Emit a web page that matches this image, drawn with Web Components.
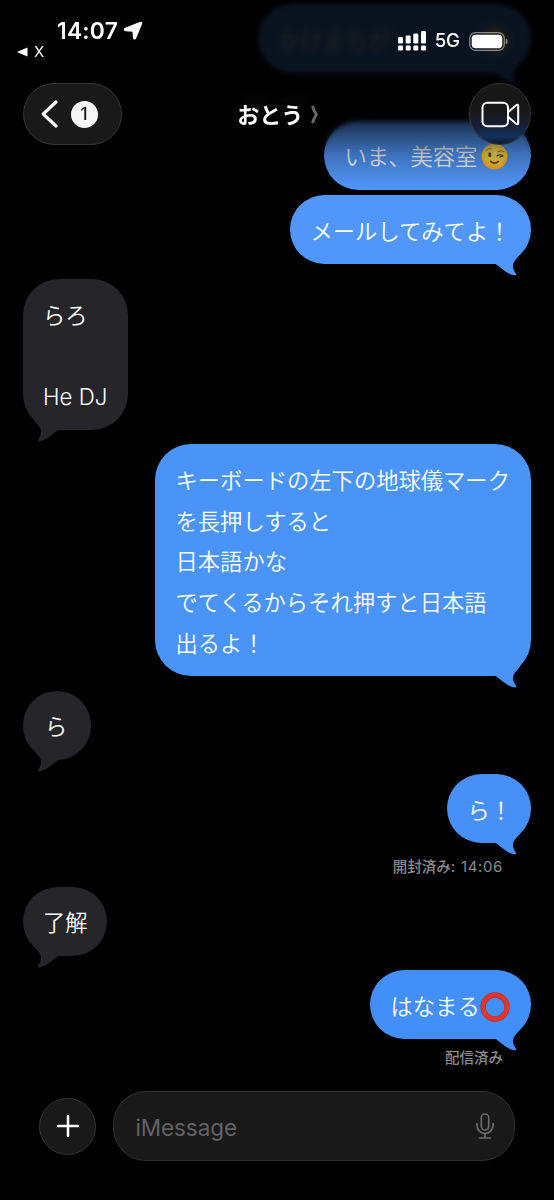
<!DOCTYPE html>
<html lang="ja">
<head>
<meta charset="utf-8">
<title>Messages</title>
<style>
html,body{margin:0;background:#000;height:1200px;overflow:hidden}
body{font-family:Inter,"Noto Sans CJK JP",sans-serif;color:#fff}
</style>
</head>
<body>
<chat-app></chat-app>
<script>
const define = (name, html) => {
  const t = document.createElement('template');
  t.innerHTML = html;
  customElements.define(name, class extends HTMLElement {
    constructor() {
      super();
      this.attachShadow({mode: 'open'}).append(t.content.cloneNode(true));
    }
  });
};

define('wink-emoji', `
<style>:host{display:inline-block;width:27px;height:27px;vertical-align:-5px;margin-left:4px}svg{display:block}</style>
<svg width="27" height="27" viewBox="0 0 27 27">
  <defs><radialGradient id="f" cx=".5" cy=".35" r=".65"><stop offset="0" stop-color="#ffe86a"/><stop offset=".7" stop-color="#ffcf3e"/><stop offset="1" stop-color="#f3a01e"/></radialGradient></defs>
  <circle cx="13.5" cy="13.5" r="13" fill="url(#f)"/>
  <ellipse cx="8.8" cy="11.7" rx="1.6" ry="2.5" fill="#6b450f"/>
  <path d="M5.6 7.3Q7.6 5 10.2 5.5M16.5 9Q20 6.5 23 8.5" fill="none" stroke="#b87a1a" stroke-width="1" stroke-linecap="round"/>
  <path d="M16 12.8Q19 10.9 22 12.9M22 12.9L19 13.8" fill="none" stroke="#6b450f" stroke-width="1.4" stroke-linecap="round"/>
  <path d="M9.5 18.4Q13.5 21.8 17.5 18.4" fill="none" stroke="#6b450f" stroke-width="1.6" stroke-linecap="round"/>
</svg>`);

define('circle-emoji', `
<style>:host{display:inline-block;width:30px;height:30px;vertical-align:-7px}svg{display:block}</style>
<svg width="30" height="30" viewBox="0 0 30 30"><circle cx="15" cy="15" r="12" fill="none" stroke="#b3302c" stroke-width="5.4"/><circle cx="15" cy="15" r="12" fill="none" stroke="#e2352c" stroke-width="4.2"/></svg>`);

define('message-bubble', `
<style>
:host{display:block;position:relative;box-sizing:border-box;width:var(--w);padding:16.5px 0 11.7px var(--pl,20.5px);
  background:var(--c);border-radius:34.5px;font:350 22.3px/40.8px Inter,"Noto Sans CJK JP",sans-serif;color:#fff;
  white-space:nowrap;align-self:flex-end;margin-top:var(--gap,0)}
:host([from=them]){--c:#26252a;--pl:20px;align-self:flex-start}
:host([big]){border-radius:36px}
svg{display:none;position:absolute;right:0;bottom:-12px;fill:var(--c)}
:host([tail]) svg{display:block}
:host([from=them]) svg{right:auto;left:0;transform:scaleX(-1)}
</style>
<slot></slot>
<svg width="40" height="28" viewBox="-40 -16 40 28"><path d="M-36-.3C-32 1.5-25.5 9.3-17 11.3C-15.2 11.8-14.2 10.7-15.2 9.4C-17.6 6.3-18.8 2.5-17.6-.5C-16.5-3.5-14-6-10.8-9.8L-14-13L-34-12Z"/></svg>`);

define('receipt-line', `
<style>:host{display:flex;align-items:center;gap:6px;align-self:flex-end;box-sizing:border-box;height:43.5px;padding:3px 28px 0 0;
  font:500 14.5px/20px Inter,"Noto Sans CJK JP",sans-serif;color:#8a8a8f}
::slotted(time){font-weight:400;font-size:15px;letter-spacing:.6px}</style><slot></slot>`);

define('day-stamp', `
<style>:host{display:flex;gap:6px;align-items:center;align-self:center;height:48px;padding-top:6px;box-sizing:border-box;filter:blur(3px)}
i{display:block;height:9px;width:33px;background:#2a2a2c}</style><i></i><i></i>`);

define('message-thread', `
<style>:host{display:flex;flex-direction:column;box-sizing:border-box;height:1091px;padding:4px 23px 0;overflow:hidden}</style><slot></slot>`);

define('status-bar', `
<style>
:host{display:flex;justify-content:space-between;height:75px;box-sizing:border-box;padding:17px 46px 0 17px}
.time{display:flex;align-items:center;gap:5px;padding-left:40px;font:600 22.8px/28px Inter,sans-serif;letter-spacing:.25px;height:28px}
.back{display:flex;align-items:center;gap:6px;font:400 15px/14px Inter,sans-serif;height:14px}
.right{display:flex;align-items:center;gap:9px;height:22px;padding-top:13px;font:500 18.7px/22px Inter,sans-serif;letter-spacing:-.1px}
svg{display:block}
</style>
<div><div class="time"><span>14:07</span><svg width="20" height="20" viewBox="0 0 20 20" fill="#fff" stroke="#fff" stroke-width="1.4" stroke-linejoin="round"><path d="M17.6 1.5C18.5 1.1 18.9 1.5 18.5 2.4L12.6 17C12.1 18.2 10.7 17.9 10.6 16.7L10.2 10.6Q10.1 10.1 9.6 10L2.8 9.5C1.2 9.4 1 8.1 2.4 7.5Z"/></svg></div>
<div class="back"><svg width="11" height="10" viewBox="0 0 11 10"><path d="M10.5 .4V9.6L.8 5.6Q0 5 .8 4.4Z" fill="#fff"/></svg><span>X</span></div></div>
<div class="right">
<svg width="28" height="20" viewBox="0 0 28 20" fill="#fff"><rect x="0" y="6" width="5" height="6.5" rx="1.3"/><rect x="7.7" y="4.5" width="5" height="8" rx="1.3"/><rect x="15.3" y="2.5" width="5" height="10" rx="1.3"/><rect x="23" y="0" width="5" height="12.5" rx="1.3"/><rect x="0" y="14.5" width="5" height="5" rx="1.3"/><rect x="7.7" y="14.5" width="5" height="5" rx="1.3"/><rect x="15.3" y="14.5" width="5" height="5" rx="1.3"/><rect x="23" y="14.5" width="5" height="5" rx="1.3"/></svg>
<span>5G</span>
<svg width="39" height="19" viewBox="0 0 39 19"><rect x=".7" y=".7" width="34.6" height="17.6" rx="5.8" fill="none" stroke="#8b8c8e" stroke-width="1.2"/><rect x="2.7" y="2.7" width="30.6" height="13.6" rx="4" fill="#fff"/><path d="M36.8 6.5Q38.6 7.2 38.6 9.5T36.8 12.5Z" fill="#8b8c8e"/></svg>
</div>`);

define('nav-bar', `
<style>
:host{display:grid;grid-template-columns:1fr auto 1fr;align-items:center;height:62px;margin-top:8px;padding:0 23px 0 22.5px}
.pill{box-sizing:border-box;display:flex;align-items:center;gap:13px;width:99px;height:62px;border:1px solid #353536;border-radius:31px;background:#191919;padding-left:17px}
.count{display:grid;place-items:center;width:27px;height:27px;border-radius:50%;background:#f6f6f6;color:#151515;font:500 17px/27px Inter,sans-serif}
.name{display:flex;align-items:center;gap:8px;font:600 22px/30px "Noto Sans CJK JP",sans-serif;padding-left:3px}
.name span{margin-top:-2px}
.video{box-sizing:border-box;justify-self:end;display:grid;place-items:center;width:62px;height:62px;border-radius:50%;border:1px solid #363739;background:linear-gradient(#171718 45%,#15213a 72%,#14305f 88%,#111c30 100%)}
svg{display:block}
</style>
<div class="pill"><svg width="17" height="28" viewBox="0 0 17 28" fill="none" stroke="#f5f5f5" stroke-width="3.2" stroke-linecap="round" stroke-linejoin="round"><path d="M15 2L2.2 14L15 26"/></svg><div class="count">1</div></div>
<div class="name"><span>おとう</span><svg width="8" height="19" viewBox="0 0 8 19"><path d="M1.5 1Q3 6 5.3 9.5Q3 13 1.5 18" fill="none" stroke="#66666a" stroke-width="3"/></svg></div>
<div class="video"><svg width="39" height="27" viewBox="0 0 39 27" fill="none" stroke="#fff" stroke-width="2" stroke-linejoin="round"><rect x="1.5" y="1.8" width="25.5" height="23.4" rx="4.8"/><path d="M27.3 11L35.5 4Q37.2 3 37.2 5V22Q37.2 24 35.5 23L27.3 16"/></svg></div>`);

define('top-overlay', `
<style>
:host{position:absolute;inset:0 0 auto;display:block;height:195px}
.veil{position:absolute;inset:0;background:linear-gradient(rgba(0,0,0,.87) 0 75px,rgba(0,0,0,.84) 105px,rgba(0,0,0,.66) 124px,rgba(0,0,0,.46) 138px,rgba(0,0,0,.25) 155px,rgba(0,0,0,.1) 175px,transparent 192px)}
.soft{position:absolute;inset:0;backdrop-filter:blur(2.5px);-webkit-mask:linear-gradient(#000 125px,transparent 150px);mask:linear-gradient(#000 125px,transparent 150px)}
.glow{position:absolute;left:483px;top:28px;width:24px;height:24px;border-radius:50%;background:#2a200a;filter:blur(5px)}
.bars{position:relative}
</style>
<div class="soft"></div><div class="veil"></div><div class="glow"></div>
<div class="bars"><status-bar></status-bar><nav-bar></nav-bar></div>`);

define('message-composer', `
<style>
:host{display:flex;align-items:center;gap:17px;height:70px;padding:0 39px}
.add{box-sizing:border-box;display:grid;place-items:center;width:57px;height:57px;border:1px solid #353536;border-radius:50%;background:#191919}
.field{box-sizing:border-box;flex:1;display:flex;align-items:center;justify-content:space-between;height:70px;border:1px solid #303031;border-radius:33px;background:#191919;padding:3px 20px 0 21.5px;font:400 22.5px/30px Inter,sans-serif;letter-spacing:-.1px;color:#626266}
svg{display:block;margin-top:-2px}
.add svg{margin:0}
</style>
<div class="add"><svg width="22" height="22" viewBox="0 0 22 22" stroke="#fff" stroke-width="2.5" stroke-linecap="round"><path d="M11 1.2V20.8M1.2 11H20.8"/></svg></div>
<div class="field"><span>iMessage</span><svg width="18" height="27" viewBox="0 0 18 27" fill="none" stroke="#6b6b6e" stroke-width="1.7" stroke-linecap="round"><rect x="5.3" y="1" width="7.4" height="16" rx="3.7"/><path d="M1 10.5V12.5A8 8 0 0 0 17 12.5V10.5M9 20.5V25M3.5 25H14.5"/></svg></div>`);

define('chat-app', `
<style>:host{display:block;position:relative;width:554px;height:1200px;background:#000;overflow:hidden}</style>
<message-thread>
<message-bubble tail style="--w:273px;--c:#5299fc">かけまちが</message-bubble>
<day-stamp></day-stamp>
<message-bubble style="--w:207px;--c:#5298fb">いま、美容室<wink-emoji></wink-emoji></message-bubble>
<message-bubble tail style="--w:241px;--c:#5197fb;--gap:5.3px">メールしてみてよ！</message-bubble>
<message-bubble from="them" tail big style="--w:105px;--gap:14.9px">らろ<br><br>He DJ</message-bubble>
<message-bubble tail big style="--w:376px;--c:#4a94f8;--gap:14.6px">キーボードの左下の地球儀マーク<br>を長押しすると<br>日本語かな<br>でてくるからそれ押すと日本語<br>出るよ！</message-bubble>
<message-bubble from="them" tail style="--w:68px;--gap:14.4px;--pl:22px">ら</message-bubble>
<message-bubble tail style="--w:84px;--c:#4690f8;--gap:14.5px">ら！</message-bubble>
<receipt-line>開封済み:<time>14:06</time></receipt-line>
<message-bubble from="them" tail style="--w:84px">了解</message-bubble>
<message-bubble tail style="--w:161px;--c:#438ff9;--gap:14.5px">はなまる<circle-emoji></circle-emoji></message-bubble>
<receipt-line style="height:34px">配信済み</receipt-line>
</message-thread>
<message-composer></message-composer>
<top-overlay></top-overlay>`);
</script>
</body>
</html>
